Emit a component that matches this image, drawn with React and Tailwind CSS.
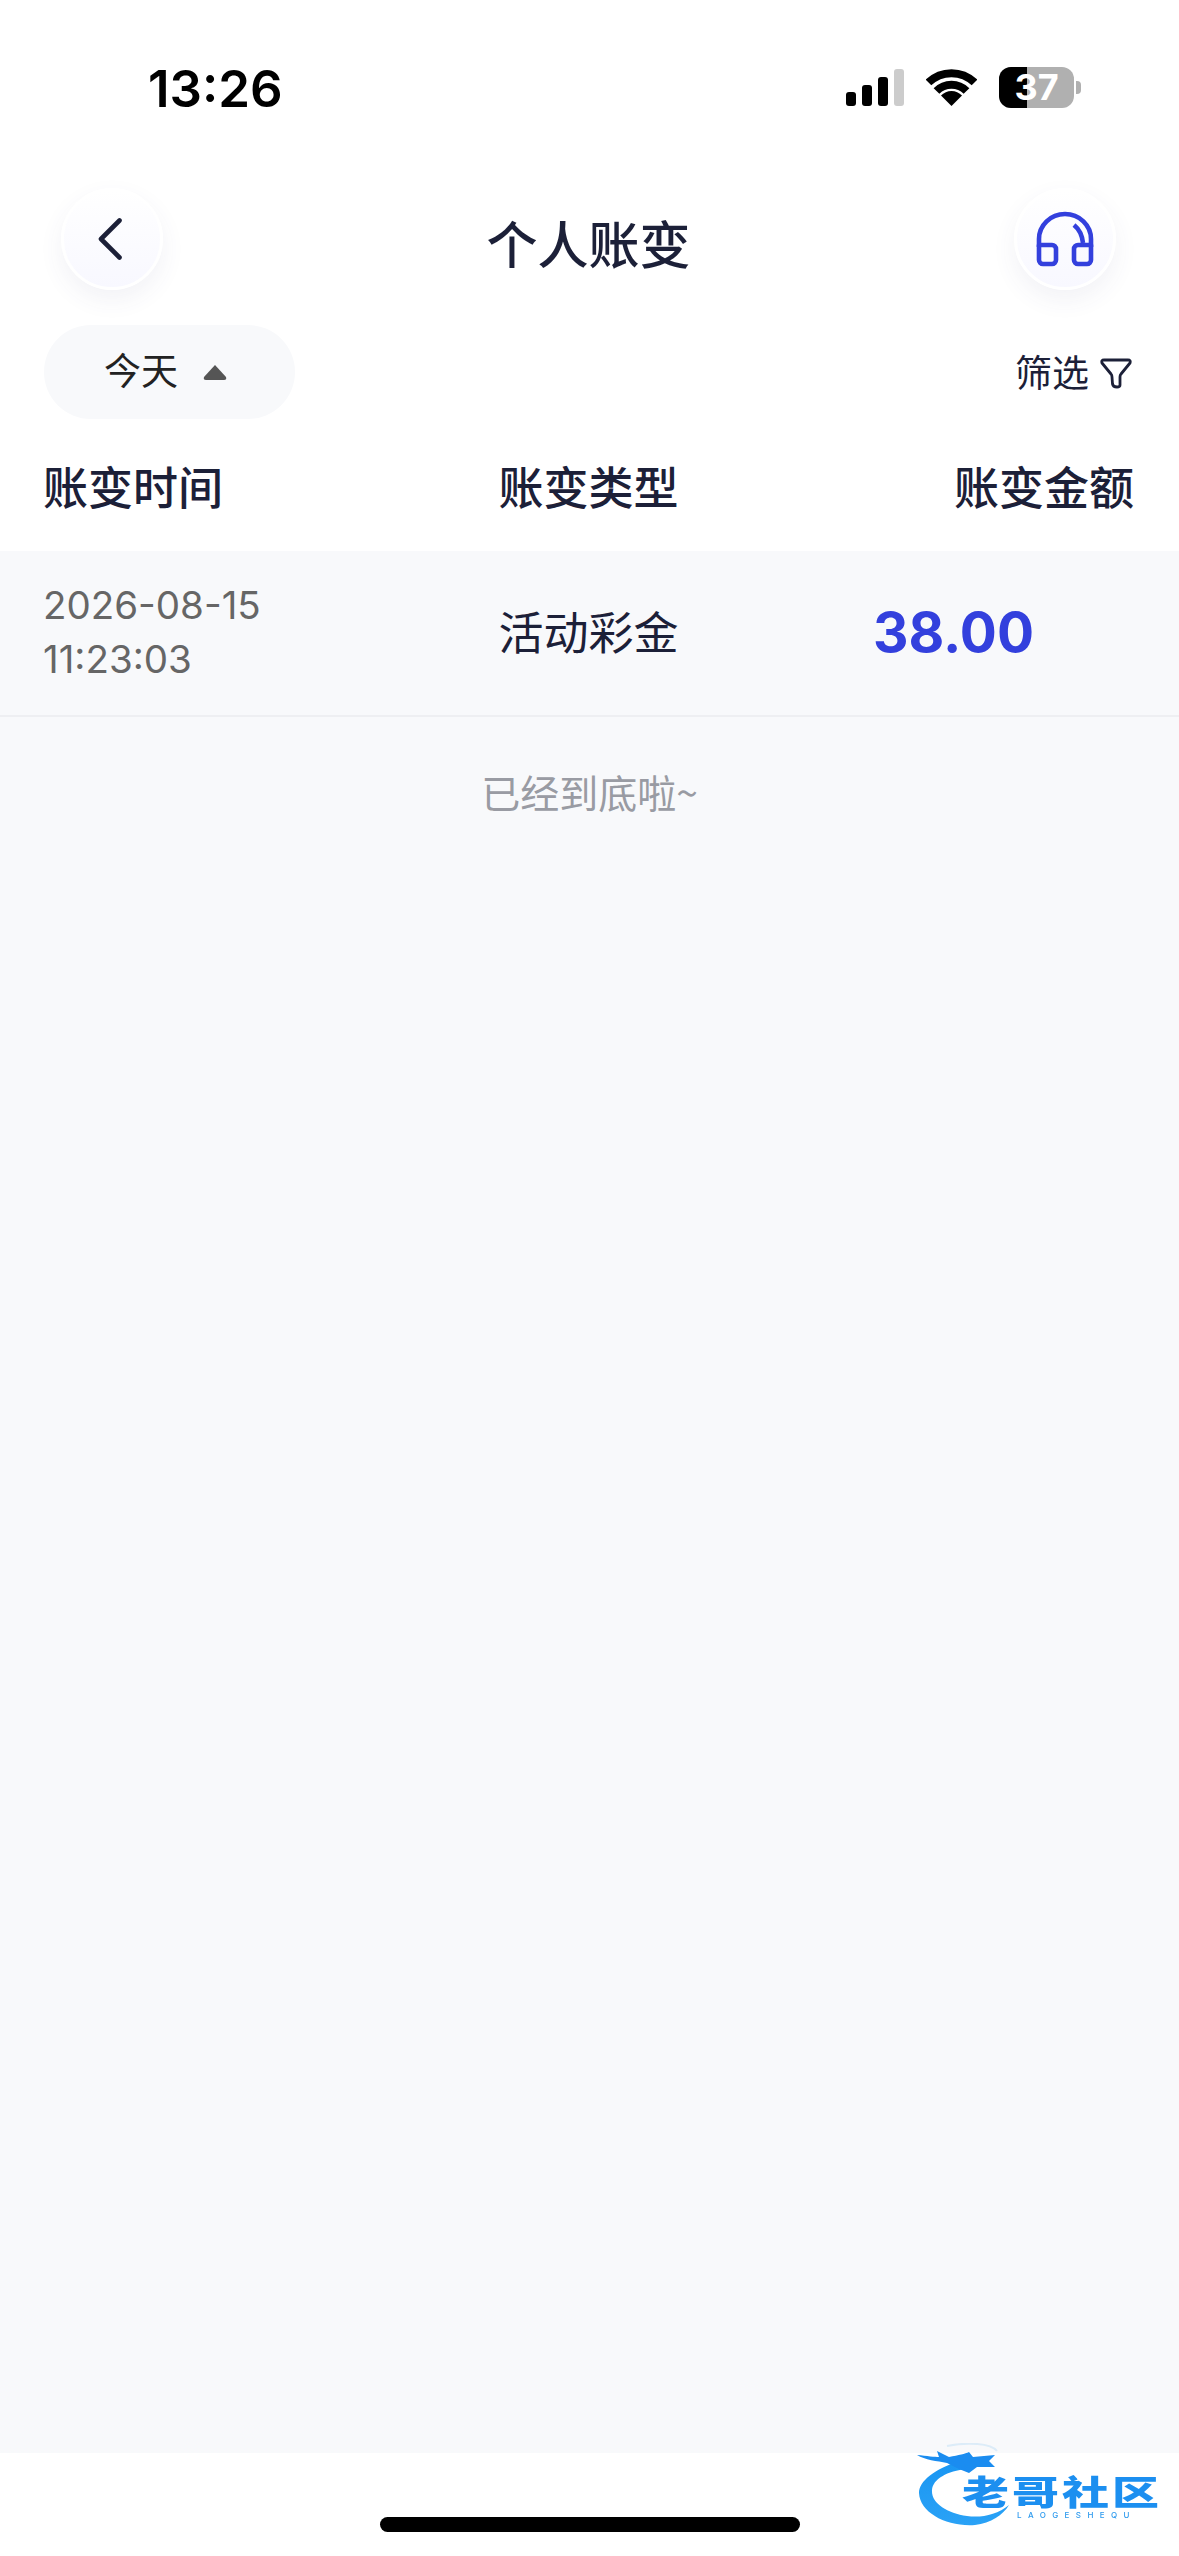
import React from "react"

const StatusBar = () => (
  <div className="h-[188px] flex justify-between items-start pl-[148px] pr-[98px]">
    <p className="mt-[59px] text-[51px] leading-[60px] font-semibold text-black font-['Inter',sans-serif]">13:26</p>
    <div className="flex items-start mt-[67px]">
      <div className="flex items-end gap-[6px] mt-[2px] h-[37px]">
        <div className="w-[10px] h-[14px] rounded-[3px] bg-black" />
        <div className="w-[10px] h-[21px] rounded-[3px] bg-black" />
        <div className="w-[10px] h-[29px] rounded-[3px] bg-black" />
        <div className="w-[10px] h-[37px] rounded-[3px] bg-[#cccccc]" />
      </div>
      <svg className="ml-[22px] mt-[2px]" width="51" height="37" viewBox="0 0 51 37">
        <path d="M2.5 13.5 A33 33 0 0 1 48.5 13.5" fill="none" stroke="#000" strokeWidth="8" />
        <path d="M10.5 22 A21 21 0 0 1 40.5 22" fill="none" stroke="#000" strokeWidth="8" />
        <path d="M25.5 37 L15 26.5 A14.5 14.5 0 0 1 36 26.5 Z" fill="#000" />
      </svg>
      <div className="ml-[22px] relative w-[75px] h-[41px]">
        <div className="w-full h-full rounded-[12px] overflow-hidden bg-[#b0b0b0]">
          <div className="w-[28px] h-full bg-black" />
        </div>
        <span className="absolute inset-0 flex items-center justify-center text-[36px] leading-[41px] font-bold text-white font-['Inter',sans-serif]">37</span>
      </div>
      <div className="ml-[2px] mt-[14px] w-[5px] h-[13px] rounded-r-[4px] bg-[#b0b0b0]" />
    </div>
  </div>
)

const RoundButton = ({ children }) => (
  <div className="w-[102px] h-[102px] rounded-full flex items-center justify-center border-[3px] border-white bg-gradient-to-b from-[#ffffff] to-[#f8f8ff] shadow-[0_10px_24px_rgba(70,70,130,0.07)]">
    {children}
  </div>
)

const NavBar = () => (
  <div className="h-[102px] flex justify-between items-center pl-[61px] pr-[63px]">
    <RoundButton>
      <svg width="24" height="42" viewBox="0 0 24 42" fill="none" className="mr-[5px]">
        <path d="M21.5 2.5 L3 21 L21.5 39.5" stroke="#1c2038" strokeWidth="4.6" strokeLinecap="round" strokeLinejoin="round" />
      </svg>
    </RoundButton>
    <h1 className="mt-[5px] text-[51px] leading-[60px] font-medium text-[#1c2038] font-['Noto_Sans_CJK_SC',sans-serif]">个人账变</h1>
    <RoundButton>
      <svg width="58" height="56" viewBox="0 0 58 56" fill="none">
        <path d="M3 36 V28 A26 25 0 0 1 55 28 V36" stroke="#3340dd" strokeWidth="4.6" />
        <path d="M3 34 H16 A4 4 0 0 1 20 38 V49 A4 4 0 0 1 16 53 H7 A4 4 0 0 1 3 49 Z" stroke="#3340dd" strokeWidth="4.6" strokeLinejoin="round" />
        <path d="M55 34 H42 A4 4 0 0 0 38 38 V49 A4 4 0 0 0 42 53 H51 A4 4 0 0 0 55 49 Z" stroke="#3340dd" strokeWidth="4.6" strokeLinejoin="round" />
        <path d="M38 14 C43 18 46 23 47 32" stroke="#3340dd" strokeWidth="4.6" />
      </svg>
    </RoundButton>
  </div>
)

const FilterRow = () => (
  <div className="mt-[35px] flex justify-between items-center pl-[44px] pr-[47px]">
    <div className="w-[251px] h-[94px] rounded-full bg-[#f8f9fb] flex items-center pl-[60px]">
      <span className="mb-[6px] text-[37px] leading-[50px] text-[#222222] font-['Noto_Sans_CJK_SC',sans-serif]">今天</span>
      <svg className="ml-[24px]" width="26" height="18" viewBox="0 0 26 18">
        <path d="M13 2 L24 14 Q25 17 22 17 H4 Q1 17 2 14 Z" fill="#555555" />
      </svg>
    </div>
    <div className="flex items-center">
      <span className="mb-[2px] text-[37px] leading-[50px] text-[#1c2038] font-['Noto_Sans_CJK_SC',sans-serif]">筛选</span>
      <svg className="ml-[11px] mt-[2px]" width="32" height="31" viewBox="0 0 32 31" fill="none">
        <path d="M4 2 H28 Q31 2 30 5 L21 16 Q20 17 20 19 V27 Q20 29 17 29 Q13 29 12.5 26 L12 19 Q12 17 11 16 L2 5 Q1 2 4 2 Z" stroke="#1c2038" strokeWidth="2.8" strokeLinejoin="round" />
      </svg>
    </div>
  </div>
)

const TableHead = () => (
  <div className="h-[132px] grid grid-cols-[1fr_auto_1fr] items-center pl-[43px] pr-[45px] pt-[1px] text-[45px] leading-[56px] font-medium text-[#1c2038] font-['Noto_Sans_CJK_SC',sans-serif]">
    <span>账变时间</span>
    <span>账变类型</span>
    <span className="text-right">账变金额</span>
  </div>
)

const Row = () => (
  <div className="h-[166px] grid grid-cols-[1fr_auto_1fr] items-center pl-[43px] pr-[45px] border-b-2 border-[#eeeff2]">
    <div className="mb-[2px] text-[38.5px] leading-[54px] text-[#666666] font-['Inter',sans-serif]">
      <p>2026-08-15</p>
      <p>11:23:03</p>
    </div>
    <span className="mb-[5px] text-[45px] leading-[56px] text-[#1c2038] font-['Noto_Sans_CJK_SC',sans-serif]">活动彩金</span>
    <span className="mb-[3px] text-right pr-[100px] text-[55px] leading-[70px] font-bold text-[#3340dd] font-['Inter',sans-serif]">38.00</span>
  </div>
)

const Logo = () => (
  <div className="absolute left-[917px] top-[2443px] w-[241px] h-[84px] blur-[0.6px]">
    <svg className="absolute inset-0" width="241" height="84" viewBox="0 0 241 84">
      <defs>
        <linearGradient id="dragon" x1="0" y1="0" x2="0" y2="1">
          <stop offset="0" stopColor="#1a96f2" />
          <stop offset="1" stopColor="#2aa2f6" />
        </linearGradient>
      </defs>
      <path d="M42 18 C18 26 2 38 2 50 C3 70 30 84 58 82 C74 80 86 72 92 62 C80 72 64 75 50 73 C30 70 14 60 15 47 C16 36 30 28 50 26 Z" fill="url(#dragon)" />
      <path d="M0 12 C10 13 18 14 22 14 L20 8 L32 14 C42 12 48 11 52 9 L56 14 L78 12 L72 18 L78 24 L60 24 L52 30 L42 26 L30 20 C20 18 8 17 0 12 Z" fill="#1a8cf0" />
      <path d="M30 3 C50 -1 74 0 80 8" stroke="#dcecf8" strokeWidth="2" fill="none" />
    </svg>
    <p className="absolute left-[45px] top-[29px] text-[47px] leading-[38px] tracking-[3px] font-black text-[#1c8ff0] whitespace-nowrap scale-y-[0.72] font-['Noto_Sans_CJK_SC',sans-serif]">老哥社区</p>
    <p className="absolute left-[100px] top-[68px] text-[8px] leading-[9px] tracking-[6.4px] font-medium text-[#2f9bee] whitespace-nowrap font-['Inter',sans-serif]">LAOGESHEQU</p>
  </div>
)

const App = () => {
  return (
    <div className="relative w-[1179px] h-[2556px] overflow-hidden bg-white flex flex-col font-['Inter','Noto_Sans_CJK_SC',sans-serif]">
      <StatusBar />
      <NavBar />
      <FilterRow />
      <TableHead />
      <div className="flex-1 bg-[#f8f9fb]">
        <Row />
        <p className="mt-[47px] text-center text-[39px] leading-[54px] text-[#999ba3] font-['Noto_Sans_CJK_SC',sans-serif]">已经到底啦~</p>
      </div>
      <div className="h-[103px] bg-white flex justify-center">
        <div className="mt-[64px] w-[420px] h-[15px] rounded-full bg-black" />
      </div>
      <Logo />
    </div>
  )
}

export default App
